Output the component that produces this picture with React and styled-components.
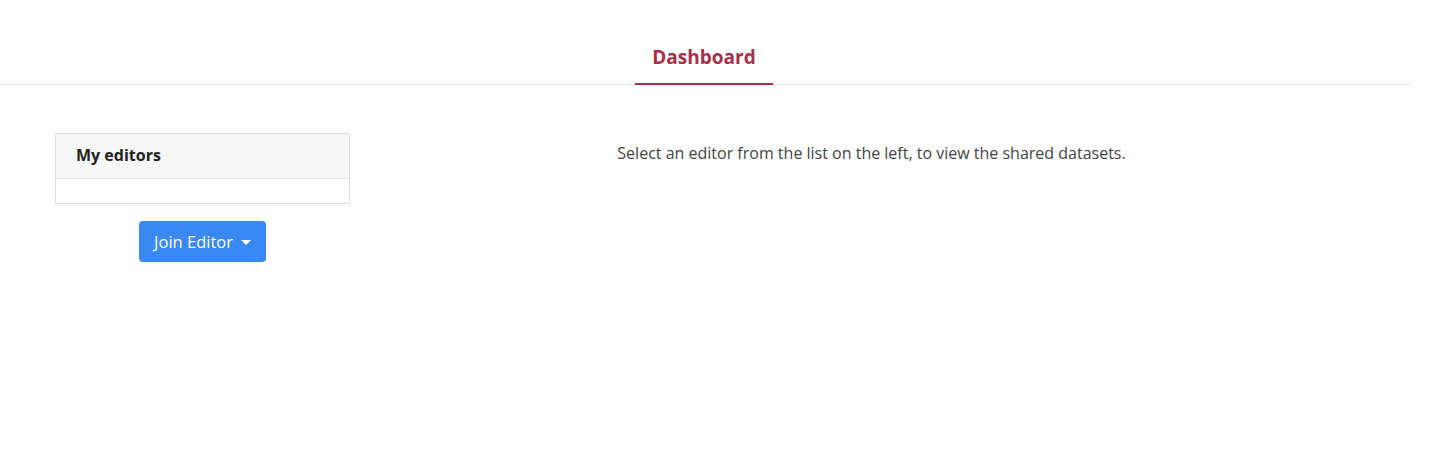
import React from "react";
import styled, { createGlobalStyle } from "styled-components";

const Global = createGlobalStyle`
  html, body { margin: 0; padding: 0; background: #fff; }
  body { font-family: "Open Sans", "Noto Sans", sans-serif; color: #333; }
  * { box-sizing: border-box; }
`;

const Page = styled.div`
  width: 1411px;
  padding-top: 40px;
`;

const Nav = styled.nav`
  display: flex;
  justify-content: center;
  padding-right: 3px;
  border-bottom: 1px solid #e6e6e6;
`;

const Tab = styled.div`
  width: 138px;
  text-align: center;
  font-size: 19px;
  font-weight: 700;
  color: ${(p) => (p.$active ? "#a92f49" : "#555")};
  padding: 2px 0 11px;
  border-bottom: 2px solid ${(p) => (p.$active ? "#a8324a" : "transparent")};
  margin-bottom: -1px;
  line-height: 30px;
`;

const Body = styled.div`
  display: flex;
  padding: 48px 0 0 55px;
`;

const Side = styled.div`
  width: 295px;
  display: flex;
  flex-direction: column;
  align-items: center;
  gap: 17px;
`;

const Card = styled.div`
  width: 100%;
  border: 1px solid #dedede;
`;

const CardHeader = styled.div`
  height: 45px;
  background: #f7f7f7;
  border-bottom: 1px solid #e3e3e3;
  padding: 0 0 2px 20px;
  display: flex;
  align-items: center;
  font-size: 16px;
  font-weight: 700;
  color: #222;
`;

const CardBody = styled.div`
  height: 24px;
`;

const Button = styled.button`
  display: flex;
  align-items: center;
  gap: 8px;
  height: 41px;
  padding: 0 15px;
  background: #3a88f2;
  color: #fff;
  border: none;
  border-radius: 4px;
  font-family: "Open Sans", "Noto Sans", sans-serif;
  font-size: 16.5px;
`;

const Caret = styled.span`
  width: 0;
  height: 0;
  border-left: 5px solid transparent;
  border-right: 5px solid transparent;
  border-top: 5px solid #fff;
  margin-top: 1px;
`;

const Main = styled.div`
  flex: 1;
  display: flex;
  justify-content: center;
  padding: 9px 0 0 22px;
  font-size: 16px;
  color: #444;
  margin-right: 40px;
`;

export default function App() {
  return (
    <>
      <Global />
      <Page>
        <Nav>
          <Tab $active>Dashboard</Tab>
        </Nav>
        <Body>
          <Side>
            <Card>
              <CardHeader>My editors</CardHeader>
              <CardBody />
            </Card>
            <Button>
              Join Editor <Caret />
            </Button>
          </Side>
          <Main>Select an editor from the list on the left, to view the shared datasets.</Main>
        </Body>
      </Page>
    </>
  );
}
